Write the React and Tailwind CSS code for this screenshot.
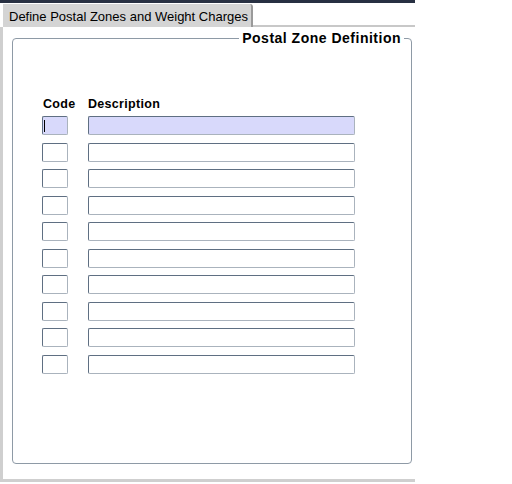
import React from 'react';

const rows = Array.from({ length: 10 }, (_, i) => i);

const boxBase =
  'h-[19px] rounded-[2px] border border-t-[#5f6f82] border-l-[#5f6f82] border-r-[#aab3bd] border-b-[#aab3bd]';

const App = () => {
  return (
    <div
      className="w-[512px] h-[484px] bg-white overflow-hidden"
      style={{ fontFamily: '"Liberation Sans", Arial, sans-serif' }}
    >
      <div className="w-[415px] flex flex-col">
        {/* Top bar */}
        <div className="h-[3px] bg-[#283042]" />

        {/* Tab strip */}
        <div className="flex h-[24px]">
          <div className="ml-[2px] mt-[1px] w-[251px] bg-[#d4d4d4] border-l border-white border-r-2 border-r-[#9a9a9a] rounded-tr-[3px] pl-[6px] pt-[6px] text-[13px] leading-[14px] text-black whitespace-nowrap">
            Define Postal Zones and Weight Charges
          </div>
          <div className="flex-1 border-b-2 border-[#c8c8c8]" />
        </div>

        {/* Panel */}
        <div className="h-[455px] border-l-[3px] border-b-[3px] border-[#cfcfcf] flex flex-col">
          <fieldset className="mt-[4px] ml-[9px] mr-[3px] h-[433px] border border-[#8e9aa6] rounded-[4px] pl-[29px] pt-[50px]">
            <legend className="ml-auto mr-[7px] px-[3px] text-[14px] leading-[15px] tracking-[0.5px] font-bold text-black">
              Postal Zone Definition
            </legend>

            <div className="flex gap-[20px] text-[12.5px] tracking-[0.3px] font-bold leading-[14px] text-black mb-[5px] pt-[1px]">
              <span className="w-[26px] pl-[1px]">Code</span>
              <span>Description</span>
            </div>

            <div className="flex flex-col gap-[7.5px]">
              {rows.map((i) => (
                <div key={i} className="flex gap-[20px]">
                  <div className={`${boxBase} w-[26px] ${i === 0 ? 'bg-[#d8d9fb]' : 'bg-white'} flex items-center`}>
                    {i === 0 && <div className="ml-[1px] w-[1px] h-[12px] bg-black" />}
                  </div>
                  <div className={`${boxBase} w-[267px] ${i === 0 ? 'bg-[#d8d9fb]' : 'bg-white'}`} />
                </div>
              ))}
            </div>
          </fieldset>
        </div>
      </div>
    </div>
  );
};

export default App;
